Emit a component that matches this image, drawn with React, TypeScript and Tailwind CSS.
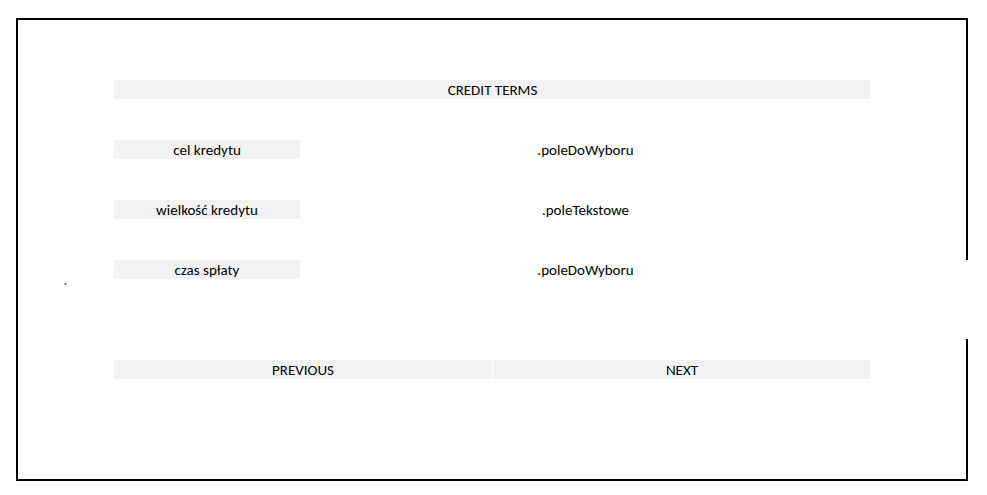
import React from "react";

const font = { fontFamily: "Calibri, Carlito, Lato, 'Liberation Sans', sans-serif" };

const cell = "h-[19px] pt-[1px] flex justify-center text-[15px] leading-[19px] text-black";

function Label({ text }: { text: string }) {
  return <div className={`${cell} bg-[#f2f2f2]`}>{text}</div>;
}

function Field({ text }: { text: string }) {
  return <div className={cell}>{text}</div>;
}

export default function App() {
  const rows = [
    { label: "cel kredytu", field: ".poleDoWyboru" },
    { label: "wielkość kredytu", field: ".poleTekstowe" },
    { label: "czas spłaty", field: ".poleDoWyboru" },
  ];

  return (
    <div className="w-[987px] h-[495px] bg-white pt-[18px] pl-[16px]" style={font}>
      <div className="w-[952px] h-[463px] border-l-2 border-t-2 border-b-2 border-black flex">
        <div className="flex-1 flex flex-col pt-[60px]">
          <div className={`ml-[96px] w-[757px] bg-[#f2f2f2] ${cell}`}>CREDIT TERMS</div>

          <div className="ml-[96px] w-[757px] mt-[41px] flex flex-col gap-[41px]">
            {rows.map((r, i) => (
              <div key={i} className="grid grid-cols-[186px_571px]">
                <Label text={r.label} />
                <Field text={r.field} />
              </div>
            ))}
          </div>

          {/* stray character left in the sheet */}
          <div className="ml-[45px] h-0 text-[15px] leading-[19px] text-[#8b2c00]">`</div>

          <div className="ml-[96px] w-[757px] mt-[81px] grid grid-cols-[378px_378px] gap-[1px]">
            <div className={`${cell} bg-[#f2f2f2]`}>PREVIOUS</div>
            <div className={`${cell} bg-[#f2f2f2]`}>NEXT</div>
          </div>
        </div>

        <div className="w-[2px] flex flex-col">
          <div className="h-[240px] bg-black" />
          <div className="h-[79px] bg-white" />
          <div className="flex-1 bg-black" />
        </div>
      </div>
    </div>
  );
}
